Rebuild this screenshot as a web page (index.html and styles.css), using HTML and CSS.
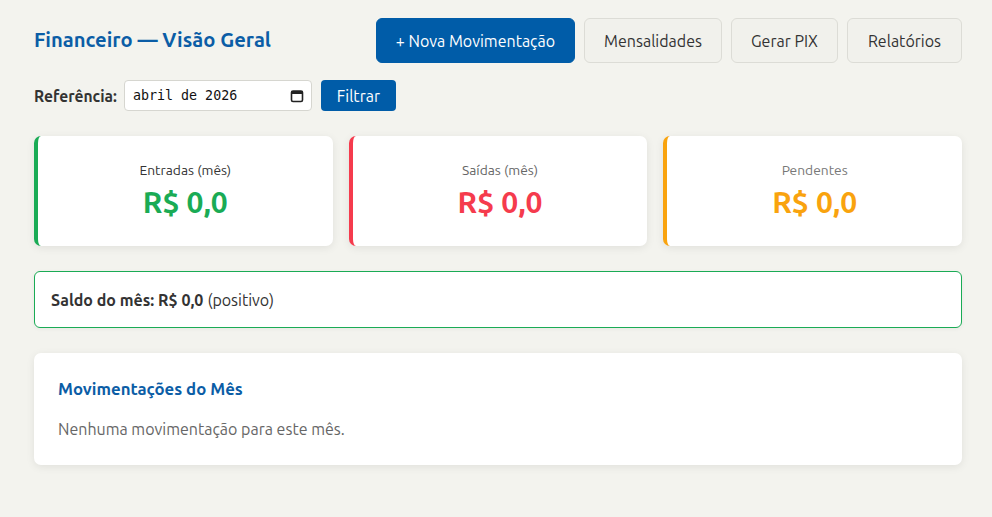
FILE: index.html
```html
<!DOCTYPE html>
<html lang="pt-BR">
<head>
<meta charset="utf-8">
<title>Financeiro</title>
<link rel="stylesheet" href="styles.css">
</head>
<body>
<div class="page">
  <header class="topbar">
    <h1 class="title">Financeiro — Visão Geral</h1>
    <nav class="actions">
      <button class="btn btn-primary">+ Nova Movimentação</button>
      <button class="btn btn-light">Mensalidades</button>
      <button class="btn btn-light">Gerar PIX</button>
      <button class="btn btn-light">Relatórios</button>
    </nav>
  </header>

  <form class="filter">
    <label class="filter-label">Referência:</label>
    <div class="month-input">
      <span class="month-value">abril de 2026</span>
      <svg class="cal-icon" width="14" height="14" viewBox="0 0 14 14"><rect x="1.5" y="2" width="11" height="10.5" rx="1.5" fill="none" stroke="#222" stroke-width="1.6"/><rect x="1.5" y="2" width="11" height="3" fill="#222"/></svg>
    </div>
    <button type="button" class="btn-filter">Filtrar</button>
  </form>

  <section class="cards">
    <div class="card card-in">
      <div class="card-label">Entradas (mês)</div>
      <div class="card-value">R$ 0,0</div>
    </div>
    <div class="card card-out">
      <div class="card-label">Saídas (mês)</div>
      <div class="card-value">R$ 0,0</div>
    </div>
    <div class="card card-pend">
      <div class="card-label">Pendentes</div>
      <div class="card-value">R$ 0,0</div>
    </div>
  </section>

  <div class="balance"><strong>Saldo do mês: R$ 0,0</strong> (positivo)</div>

  <section class="panel">
    <h2 class="panel-title">Movimentações do Mês</h2>
    <p class="panel-empty">Nenhuma movimentação para este mês.</p>
  </section>
</div>
</body>
</html>
```

FILE: styles.css
```css
* { box-sizing: border-box; }
html, body { margin: 0; padding: 0; }
body {
  background: #f3f3ee;
  font-family: "Ubuntu", "Noto Sans", sans-serif;
  color: #333;
}
.page {
  padding: 18px 30px 40px 34px;
}
.topbar {
  display: flex;
  align-items: center;
  justify-content: space-between;
}
.title {
  margin: 0;
  font-size: 20.2px;
  line-height: 1.2;
  font-weight: 700;
  color: #0b5da6;
}
.actions {
  display: flex;
  gap: 9px;
}
.btn {
  height: 45px;
  padding: 0 19px;
  font-family: inherit;
  font-size: 16px;
  border-radius: 6px;
  cursor: pointer;
}
.btn-primary {
  background: #005ca8;
  color: #fff;
  border: 1px solid #005ca8;
}
.btn-light {
  background: #f1f1ec;
  color: #333;
  border: 1px solid #dcdcd6;
}
.btn-light:last-child {
  padding: 0 20px;
}
.filter {
  display: flex;
  align-items: center;
  margin-top: 17px;
}
.filter-label {
  font-weight: 700;
  font-size: 15.6px;
  color: #333;
  margin-right: 7px;
}
.month-input {
  width: 188px;
  height: 31px;
  margin-right: 9px;
  background: #fff;
  border: 1px solid #d6d6d0;
  border-radius: 4px;
  display: flex;
  align-items: center;
  justify-content: space-between;
  padding: 0 7px 0 8px;
}
.month-value {
  font-family: "DejaVu Sans Mono", monospace;
  font-size: 13.33px;
  color: #111;
}
.btn-filter {
  height: 31px;
  width: 75px;
  padding: 0;
  background: #005ca8;
  color: #fff;
  border: none;
  border-radius: 4px;
  font-family: inherit;
  font-size: 16px;
}
.cards {
  display: grid;
  grid-template-columns: repeat(3, 1fr);
  gap: 16px;
  margin-top: 25px;
}
.card {
  background: #fff;
  height: 110px;
  border-radius: 7px;
  border-left: 4px solid;
  box-shadow: 0 2px 8px rgba(0,0,0,0.08);
  display: flex;
  flex-direction: column;
  align-items: center;
  justify-content: center;
  gap: 8px;
}
.card-label {
  font-size: 13.8px;
  line-height: 14px;
  color: #333;
}
.card-value {
  font-size: 30px;
  line-height: 34px;
  font-weight: 700;
}
.card-in { border-left-color: #1aab55; }
.card-in .card-value { color: #1aab55; }
.card-out { border-left-color: #f53b4d; }
.card-out .card-label { color: #666; }
.card-out .card-value { color: #f53b4d; }
.card-pend { border-left-color: #f9a30e; }
.card-pend .card-label { color: #777; }
.card-pend .card-value { color: #f9a30e; }
.balance {
  margin-top: 25px;
  height: 57px;
  background: #fff;
  border: 1px solid #1aab55;
  border-radius: 6px;
  padding: 0 16px;
  display: flex;
  align-items: center;
  gap: 4px;
  font-size: 16px;
  color: #333;
  box-shadow: 0 1px 4px rgba(0,0,0,0.05);
}
.balance strong { font-weight: 700; }
.panel {
  margin-top: 25px;
  background: #fff;
  border-radius: 7px;
  padding: 26px 24px 25px;
  box-shadow: 0 2px 8px rgba(0,0,0,0.08);
}
.panel-title {
  margin: 0;
  font-size: 16.8px;
  line-height: 20px;
  font-weight: 700;
  color: #0b5da6;
}
.panel-empty {
  margin: 20px 0 0;
  font-size: 16px;
  line-height: 21px;
  color: #666;
}
```
